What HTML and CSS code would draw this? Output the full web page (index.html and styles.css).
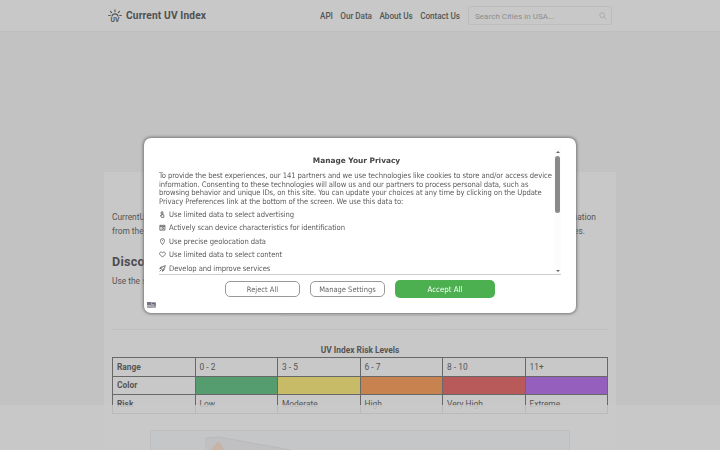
FILE: index.html
```html
<!DOCTYPE html>
<html lang="en">

<head>
    <meta charset="UTF-8">
    <meta name="viewport" content="width=device-width, initial-scale=1.0">
    <title>Current UV Index</title>
    <link rel="stylesheet" href="styles.css">
</head>

<body>
    <header class="site-header">
        <div class="header-inner">
            <a class="brand" href="#">
                <svg class="logo" viewBox="0 0 14 14" width="14" height="14">
                    <path d="M4 7.2q.4-2.3 3-2.3t3 2.3M7 .8v2M2.5 2.4l1.1 1.3M11.5 2.4l-1.1 1.3M.7 6.5h1.6M11.7 6.5h1.6" fill="none" stroke="#555" stroke-width="1.1" stroke-linecap="round"/>
                    <text x="7" y="13" text-anchor="middle">UV</text>
                </svg>
                <span>Current UV Index</span>
            </a>
            <nav class="nav">
                <a href="#">API</a>
                <a href="#">Our Data</a>
                <a href="#">About Us</a>
                <a href="#">Contact Us</a>
            </nav>
            <div class="search">
                <span>Search Cities in USA...</span>
                <svg viewBox="0 0 10 10" width="8" height="8">
                    <path d="M7 4a3 3 0 1 1-6 0a3 3 0 0 1 6 0M6.2 6.2L9 9" fill="none" stroke="#a5a5a5" stroke-width="1"/>
                </svg>
            </div>
        </div>
    </header>

    <main class="content">
        <div class="intro">
            <span>CurrentUV</span>
            <span>radiation</span>
        </div>
        <div class="intro">
            <span>from the</span>
            <span class="intro-end">indexes.</span>
        </div>
        <h2>Discover</h2>
        <p class="hint">Use the search</p>
        <div class="city-box"></div>
        <hr>
        <table>
            <caption>UV Index Risk Levels</caption>
            <tr>
                <th>Range</th>
                <td>0 - 2</td>
                <td>3 - 5</td>
                <td>6 - 7</td>
                <td>8 - 10</td>
                <td>11+</td>
            </tr>
            <tr>
                <th>Color</th>
                <td class="low"></td>
                <td class="moderate"></td>
                <td class="high"></td>
                <td class="very-high"></td>
                <td class="extreme"></td>
            </tr>
            <tr>
                <th>Risk</th>
                <td>Low</td>
                <td>Moderate</td>
                <td>High</td>
                <td>Very High</td>
                <td>Extreme</td>
            </tr>
        </table>
    </main>

    <div class="bottom-bar">
        <div class="banner">
            <svg viewBox="0 0 418 19" width="418" height="19">
                <path d="M54 7L68 6L140 19H54z" fill="#c0c0c2"/>
                <path d="M54 7L68 6L140 19" stroke="#b8b8b8" stroke-width=".8" fill="none"/>
                <path d="M60 19q3-6 7-8q4 2 6 8z" fill="#c8b4a6"/>
            </svg>
        </div>
    </div>

    <div class="privacy">
        <div class="privacy-scroll">
            <div class="privacy-text">
                <h1>Manage Your Privacy</h1>
                <p>
                    To provide the best experiences, our 141 partners and we use technologies like cookies to store and/or access device<br>
                    information. Consenting to these technologies will allow us and our partners to process personal data, such as<br>
                    browsing behavior and unique IDs, on this site. You can update your choices at any time by clicking on the Update<br>
                    Privacy Preferences link at the bottom of the screen. We use this data to:
                </p>
                <ul>
                    <li>
                        <svg viewBox="0 0 8 8" width="7" height="7"><path d="M2.5 1h2v2.5h-2zM3.5 3.5l2 1v2.8H2.8L1.5 5h1.7z"/></svg>
                        Use limited data to select advertising
                    </li>
                    <li>
                        <svg viewBox="0 0 8 8" width="7" height="7"><path d="M1 1.5h5.8v5.5H1zM1 2.8h5.8M3 4.2h2v1.6H3"/></svg>
                        Actively scan device characteristics for identification
                    </li>
                    <li>
                        <svg viewBox="0 0 8 8" width="7" height="7"><path d="M4 7.5C2.5 5.5 1.7 4.3 1.7 3a2.3 2.3 0 0 1 4.6 0c0 1.3-.8 2.5-2.3 4.5zM4 2.5v1"/></svg>
                        Use precise geolocation data
                    </li>
                    <li>
                        <svg viewBox="0 0 8 8" width="7" height="7"><path d="M4 7L1 4C0 2.6 1.3 1 2.7 1.2L4 2l1.3-.8C6.7 1 8 2.6 7 4z"/></svg>
                        Use limited data to select content
                    </li>
                    <li>
                        <svg viewBox="0 0 8 8" width="7" height="7"><path d="M2.3 4.2Q4 1 7.3.7Q7 4 3.8 5.7zM2.5 3.8L.8 4l1.4-1.8h2M4.2 5.5L4 7.2l1.8-1.4v-2M.8 7.2l1.7-1.7"/></svg>
                        Develop and improve services
                    </li>
                </ul>
            </div>
            <div class="scrollbar">
                <i class="arrow-up"></i>
                <i class="thumb"></i>
                <i class="arrow-down"></i>
            </div>
        </div>
        <div class="buttons">
            <button class="btn">Reject All</button>
            <button class="btn">Manage Settings</button>
            <button class="btn accept">Accept All</button>
        </div>
        <svg class="flag" viewBox="0 0 9 6" width="9" height="6">
            <path d="M0 0h9v6H0z" fill="#b6b3ba"/>
            <path d="M0 0h4v3H0z" fill="#73738a"/>
            <path d="M4 1h5M4 3h5M0 5h6" stroke="#958a92" stroke-width=".8"/>
            <path d="M5 1.5h3v3" stroke="#666" fill="none"/>
        </svg>
    </div>
</body>

</html>
```
FILE: styles.css
```css
* {
    box-sizing: border-box;
}

body {
    margin: 0;
    height: 450px;
    overflow: hidden;
    background: #c2c2c2;
    color: #555;
    font-family: Roboto, sans-serif;
    font-size: 8.4px;
}

a {
    color: inherit;
    text-decoration: none;
}

.site-header {
    height: 32px;
    background: #c8c8c8;
    border-bottom: 1px solid #bebebe;
}

.header-inner {
    display: flex;
    align-items: center;
    width: 504px;
    height: 31px;
    margin: 0 auto;
}

.brand {
    display: flex;
    align-items: center;
    gap: 4px;
    width: 212px;
    color: #505050;
    font-size: 10.2px;
    font-weight: 700;
    letter-spacing: 0.14px;
    white-space: nowrap;
}

.logo text {
    font: 700 6.8px Roboto, sans-serif;
    letter-spacing: 0;
    fill: #555;
}

.nav {
    display: flex;
    justify-content: space-between;
    width: 140px;
    font-size: 8.2px;
    font-weight: 500;
    letter-spacing: -0.05px;
    white-space: nowrap;
}

.search {
    display: flex;
    align-items: center;
    justify-content: space-between;
    width: 144px;
    height: 19px;
    margin-left: 8px;
    padding: 0 4px 0 6px;
    border: 1px solid #bdbdbd;
    border-radius: 2px;
    color: #8c8c8c;
    font-size: 8.1px;
}

.content {
    width: 512px;
    height: 278px;
    margin: 140px auto 0;
    padding: 38px 8px 0;
    background: #c8c8c8;
}

.intro {
    display: flex;
    justify-content: space-between;
    height: 14px;
    padding-right: 12px;
    line-height: 14px;
}

.intro-end {
    padding-right: 11px;
}

h2 {
    margin: 16px 0 0;
    color: #4c4b52;
    font-size: 12.5px;
    letter-spacing: 0.3px;
    line-height: 16px;
}

.hint {
    margin: 4px 0 0;
    line-height: 14px;
}

.city-box {
    width: 158px;
    height: 13px;
    margin: 15px auto 0;
    border: 1px solid #bdbdbd;
}

hr {
    height: 1px;
    margin: 13px 0 12px;
    border: 0;
    background: #bebebe;
}

table {
    width: 496px;
    border-collapse: collapse;
    table-layout: fixed;
}

caption {
    height: 15px;
    font-weight: 700;
    line-height: 16px;
}

tr {
    height: 18.5px;
}

th,
td {
    padding: 0 4px;
    border: 1px solid #686868;
    text-align: left;
    line-height: 14px;
}

.low {
    background: #559c6e;
}

.moderate {
    background: #c8bb68;
}

.high {
    background: #c88250;
}

.very-high {
    background: #b95a5a;
}

.extreme {
    background: #955fbe;
}

.bottom-bar {
    position: fixed;
    left: 0;
    right: 0;
    bottom: 0;
    height: 45px;
    padding-top: 25px;
    background: rgba(201, 201, 201, 0.85);
}

.banner {
    width: 420px;
    height: 20px;
    margin: 0 auto;
    border: 1px solid #bfbfbf;
    border-bottom: 0;
    background: #c5c6c8;
}

/* privacy dialog */
.privacy {
    position: fixed;
    left: 144px;
    top: 138px;
    width: 432px;
    height: 175px;
    padding: 10px 15px 0;
    border-radius: 7px;
    background: #fff;
    box-shadow: 0 0 3px 1px #777;
    color: #5c5c5c;
    font-family: "DejaVu Sans Condensed", "DejaVu Sans", sans-serif;
    font-size: 7.6px;
    letter-spacing: -0.08px;
}

.privacy-scroll {
    display: flex;
    height: 127px;
    overflow: hidden;
    border-bottom: 1px solid #ccc;
}

.privacy-text {
    width: 395px;
    flex: none;
}

h1 {
    margin: 8px 0 7px;
    color: #444;
    font-family: "DejaVu Sans", sans-serif;
    font-size: 7.4px;
    letter-spacing: 0;
    line-height: 9px;
    text-align: center;
}

.privacy p {
    margin: 0;
    line-height: 8.7px;
    white-space: nowrap;
}

.privacy ul {
    margin: 0.5px 0 0;
    padding: 0;
    list-style: none;
}

.privacy li {
    display: flex;
    align-items: center;
    gap: 3px;
    height: 13.5px;
}

.privacy li svg {
    fill: none;
    stroke: #555;
    stroke-width: 0.9;
}

.scrollbar {
    display: flex;
    flex-direction: column;
    align-items: center;
    width: 7px;
    padding: 3px 0 2px;
    background: #fcfcfc;
}

.thumb {
    width: 5px;
    height: 57px;
    margin-top: 3px;
    border-radius: 3px;
    background: #8a8a8a;
}

.arrow-up,
.arrow-down {
    border: 2.5px solid transparent;
}

.arrow-up {
    border-top: 0;
    border-bottom: 2px solid #666;
}

.arrow-down {
    margin-top: auto;
    border-bottom: 0;
    border-top: 2px solid #666;
}

.buttons {
    display: flex;
    align-items: center;
    gap: 10px;
    height: 28px;
    padding-left: 66px;
}

.btn {
    width: 75px;
    height: 16px;
    padding: 0;
    border: 1px solid #999;
    border-radius: 5px;
    background: #fff;
    color: #666;
    font-family: inherit;
    font-size: 7.5px;
    cursor: pointer;
}

.accept {
    width: 100px;
    height: 18px;
    border: 0;
    background: #4caf50;
    color: #fff;
    font-size: 7.8px;
}

.flag {
    position: absolute;
    left: 3px;
    bottom: 5px;
}
```
